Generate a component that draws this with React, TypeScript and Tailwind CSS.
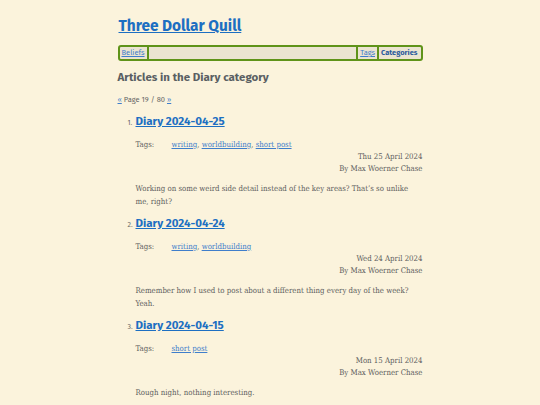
const posts = [
  {
    title: "Diary 2024-04-25",
    tags: ["writing", "worldbuilding", "short post"],
    date: "Thu 25 April 2024",
    summary:
      "Working on some weird side detail instead of the key areas? That\u2019s so unlike me, right?",
  },
  {
    title: "Diary 2024-04-24",
    tags: ["writing", "worldbuilding"],
    date: "Wed 24 April 2024",
    summary:
      "Remember how I used to post about a different thing every day of the week? Yeah.",
  },
  {
    title: "Diary 2024-04-15",
    tags: ["short post"],
    date: "Mon 15 April 2024",
    summary: "Rough night, nothing interesting.",
  },
];

const sans = "font-['Fira_Sans','Lato','Noto_Sans',sans-serif]";
const serif = "font-['DejaVu_Serif_Condensed','Liberation_Serif',serif]";

const App = () => {
  return (
    <div className="min-h-[405px] bg-[#fbf3dc] text-[#555]">
      <div className="mx-auto w-[305px] pt-[14px]">
        <h1 className={`${sans} text-[15.4px] font-bold leading-[24px] pl-[1px]`}>
          <a href="#" className="text-[#1d6fc2] underline">
            Three Dollar Quill
          </a>
        </h1>

        <nav
          className={`${sans} mt-[7px] flex h-[16px] items-stretch rounded-[3px] border-2 border-[#5f9319] bg-[#ebe4d1] text-[7.5px] leading-[12px]`}
        >
          <a href="#" className="px-[2px] text-[#3f7ecb] underline">
            Beliefs
          </a>
          <span className="w-[2px] bg-[#5f9319]" />
          <span className="flex-1" />
          <span className="w-[2px] bg-[#5f9319]" />
          <a href="#" className="px-[2px] text-[#3f7ecb] underline">
            Tags
          </a>
          <span className="w-[2px] bg-[#5f9319]" />
          <a href="#" className="pl-[2px] pr-[3px] font-bold text-[#2a5a9c]">
            Categories
          </a>
        </nav>

        <h2 className={`${sans} mt-[8px] text-[11.5px] font-bold leading-[16px] text-[#5a5f63]`}>
          Articles in the Diary category
        </h2>

        <p className={`${sans} mt-[10px] text-[7.5px] leading-[10px] text-[#666]`}>
          <a href="#" className="text-[#3f7ecb] underline">«</a> Page 19 / 80{" "}
          <a href="#" className="text-[#3f7ecb] underline">»</a>
        </p>

        <ol className="mt-[7px] pl-[18px]">
          {posts.map((post, i) => (
            <li key={i} className="mb-[6px]">
              <div className="flex items-baseline">
                <span className={`${sans} -ml-[8px] w-[8px] text-[7px] text-[#666]`}>
                  {i + 1}.
                </span>
                <a
                  href="#"
                  className={`${sans} text-[11.5px] font-bold leading-[18px] text-[#1d6fc2] underline`}
                >
                  {post.title}
                </a>
              </div>

              <div className={`${serif} text-[7.8px] leading-[12px] text-[#5e5e5e]`}>
                <div className="mt-[9px] flex">
                  <span className="w-[36px]">Tags:</span>
                  <span>
                    {post.tags.map((tag, j) => (
                      <span key={tag}>
                        <a href="#" className="text-[#3f7ecb] underline">
                          {tag}
                        </a>
                        {j < post.tags.length - 1 && ", "}
                      </span>
                    ))}
                  </span>
                </div>
                <div className="text-right">{post.date}</div>
                <div className="text-right">By Max Woerner Chase</div>
                <p className="mt-[7px] leading-[13px]">{post.summary}</p>
              </div>
            </li>
          ))}
        </ol>
      </div>
    </div>
  );
};

export default App;
